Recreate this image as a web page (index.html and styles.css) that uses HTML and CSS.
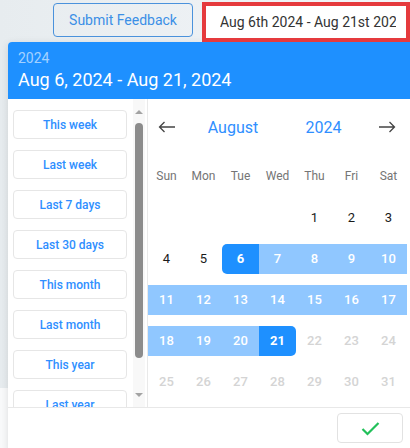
FILE: index.html
```html
<!DOCTYPE html>
<html lang="en">
<head>
<meta charset="utf-8">
<title>Date range picker</title>
<link rel="stylesheet" href="styles.css">
</head>
<body>
  <div class="topbar">
    <button class="feedback">Submit Feedback</button>
    <div class="range-input"><span class="range-text">Aug 6th 2024 - Aug 21st 2024</span></div>
  </div>

  <div class="picker">
    <div class="picker-head">
      <div class="head-year">2024</div>
      <div class="head-range">Aug 6, 2024 - Aug 21, 2024</div>
    </div>

    <div class="picker-body">
      <div class="presets">
        <div class="preset-list">
          <button class="preset">This week</button>
          <button class="preset">Last week</button>
          <button class="preset">Last 7 days</button>
          <button class="preset">Last 30 days</button>
          <button class="preset">This month</button>
          <button class="preset">Last month</button>
          <button class="preset">This year</button>
          <button class="preset">Last year</button>
        </div>
        <div class="scrollbar">
          <span class="sb-up"></span>
          <span class="sb-thumb"></span>
          <span class="sb-space"></span>
          <span class="sb-down"></span>
        </div>
      </div>

      <div class="calendar">
        <div class="cal-nav">
          <span class="nav-arrow">
            <svg width="18" height="12" viewBox="0 0 18 12"><path d="M17 6H1.5M6.5 1L1.5 6l5 5" fill="none" stroke="#444" stroke-width="1.3"/></svg>
          </span>
          <span class="nav-month">August</span>
          <span class="nav-year">2024</span>
          <span class="nav-arrow">
            <svg width="18" height="12" viewBox="0 0 18 12"><path d="M1 6h15.5M11.5 1l5 5-5 5" fill="none" stroke="#444" stroke-width="1.3"/></svg>
          </span>
        </div>
        <div class="weekdays">
          <span>Sun</span><span>Mon</span><span>Tue</span><span>Wed</span><span>Thu</span><span>Fri</span><span>Sat</span>
        </div>
        <div class="days">
          <span class="day"></span><span class="day"></span><span class="day"></span><span class="day"></span>
          <span class="day">1</span><span class="day">2</span><span class="day">3</span>

          <span class="day">4</span><span class="day">5</span>
          <span class="day sel start">6</span><span class="day in">7</span><span class="day in">8</span><span class="day in">9</span><span class="day in">10</span>

          <span class="day in">11</span><span class="day in">12</span><span class="day in">13</span><span class="day in">14</span><span class="day in">15</span><span class="day in">16</span><span class="day in">17</span>

          <span class="day in">18</span><span class="day in">19</span><span class="day in">20</span><span class="day sel end">21</span>
          <span class="day off">22</span><span class="day off">23</span><span class="day off">24</span>

          <span class="day off">25</span><span class="day off">26</span><span class="day off">27</span><span class="day off">28</span><span class="day off">29</span><span class="day off">30</span><span class="day off">31</span>
        </div>
      </div>
    </div>

    <div class="picker-foot">
      <button class="ok" aria-label="Apply">
        <svg width="19" height="15" viewBox="0 0 19 15"><path d="M1.5 8l5 5L17.5 2" fill="none" stroke="#22c05a" stroke-width="2.2"/></svg>
      </button>
    </div>
  </div>
</body>
</html>
```

FILE: styles.css
```css
* { box-sizing: border-box; }

html, body {
  margin: 0;
  height: 100%;
}

body {
  font-family: Roboto, "Liberation Sans", sans-serif;
  background: linear-gradient(to right, #e7ecef, #f3f6f9) top left / 100% 388px no-repeat, #f9fafb;
  overflow: hidden;
}

button {
  font-family: inherit;
  cursor: pointer;
}

/* top bar */
.topbar {
  height: 42px;
  display: flex;
  align-items: flex-start;
  padding-left: 53px;
  gap: 9px;
}

.feedback {
  margin-top: 3px;
  width: 140px;
  height: 34px;
  border: 1px solid #4a92dc;
  border-radius: 4px;
  background: transparent;
  color: #3b8fe6;
  font-size: 14px;
  padding: 0;
}

.range-input {
  margin-top: 2px;
  width: 208px;
  height: 40px;
  flex: none;
  border: 4px solid #e53a3d;
  background: #fff;
  padding: 0 10px 0 14px;
  display: flex;
  align-items: center;
}

.range-text {
  display: block;
  overflow: hidden;
  white-space: nowrap;
  font-size: 14px;
  color: #333;
  width: 100%;
}

/* picker */
.picker {
  margin-left: 8px;
  width: 402px;
  background: #fff;
  border-radius: 4px 4px 0 0;
  box-shadow: 0 2px 8px rgba(0, 0, 0, 0.12);
}

.picker-head {
  background: #1e90ff;
  border-radius: 4px 0 0 0;
  color: #fff;
  padding: 8px 10px 8px 10px;
  height: 57px;
}

.head-year {
  font-size: 14px;
  line-height: 16px;
  color: rgba(255, 255, 255, 0.6);
}

.head-range {
  margin-top: 3px;
  font-size: 18px;
  line-height: 22px;
}

.picker-body {
  display: flex;
  height: 308px;
}

/* presets */
.presets {
  width: 140px;
  display: flex;
  border-right: 1px solid #e9e9e9;
  padding-right: 2px;
}

.preset-list {
  width: 125px;
  overflow: hidden;
  padding: 11px 0 0 5px;
  display: flex;
  flex-direction: column;
  gap: 11px;
}

.preset {
  flex: none;
  width: 114px;
  height: 29px;
  border: 1px solid #e6e6e6;
  border-radius: 4px;
  background: #fff;
  color: #2f8fff;
  font-size: 12px;
  font-weight: 500;
  padding: 0;
}

.scrollbar {
  width: 12px;
  background: #f8f8f8;
  display: flex;
  flex-direction: column;
  align-items: center;
  padding: 11px 0 10px;
}

.sb-up {
  width: 0;
  height: 0;
  border-left: 4px solid transparent;
  border-right: 4px solid transparent;
  border-bottom: 4px solid #a3a3a3;
}

.sb-down {
  width: 0;
  height: 0;
  border-left: 4px solid transparent;
  border-right: 4px solid transparent;
  border-top: 4px solid #a3a3a3;
}

.sb-thumb {
  margin-top: 9px;
  width: 8px;
  height: 235px;
  border-radius: 4px;
  background: #8c8c8c;
}

.sb-space { flex: 1; }

/* calendar */
.calendar {
  flex: 1;
  overflow: hidden;
}

.cal-nav {
  height: 56px;
  display: grid;
  grid-template-columns: 37px 96px 85px 41px;
  align-items: center;
  justify-items: center;
}

.nav-arrow {
  display: flex;
}

.nav-month,
.nav-year {
  font-size: 16px;
  color: #2f8fff;
}

.weekdays {
  height: 42px;
  display: grid;
  grid-template-columns: repeat(7, 37px);
  align-items: center;
  justify-items: center;
  font-size: 12px;
  color: #757575;
}

.days {
  display: grid;
  grid-template-columns: repeat(7, 37px);
  grid-auto-rows: 41px;
  align-items: center;
}

.day {
  height: 30px;
  line-height: 30px;
  text-align: center;
  font-size: 13px;
  color: #1a1a1a;
}

.day.in {
  background: #90c7ff;
  color: #fff;
  font-weight: 500;
}

.day.sel {
  background: #1e90ff;
  color: #fff;
  font-weight: 700;
}

.day.start { border-radius: 5px 0 0 5px; }
.day.end { border-radius: 0 5px 5px 0; }

.day.off {
  color: #d4d4d4;
  font-weight: 500;
}

/* footer */
.picker-foot {
  border-top: 1px solid #e8e8e8;
  height: 45px;
  display: flex;
  justify-content: flex-end;
  align-items: flex-start;
  padding: 5px 7px 0 0;
}

.ok {
  width: 66px;
  height: 30px;
  border: 1px solid #e2e2e2;
  border-radius: 4px;
  background: #fff;
  display: flex;
  align-items: center;
  justify-content: center;
  padding: 0;
}
```
